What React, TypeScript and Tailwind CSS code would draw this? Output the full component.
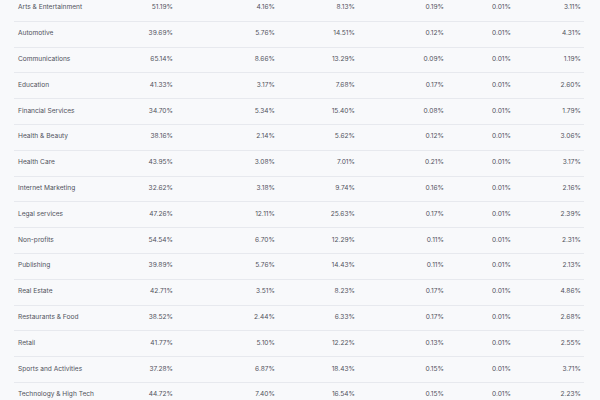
import React from "react";

const rows: [string, string, string, string, string, string, string][] = [
  ["Arts & Entertainment", "51.19%", "4.16%", "8.13%", "0.19%", "0.01%", "3.11%"],
  ["Automotive", "39.69%", "5.76%", "14.51%", "0.12%", "0.01%", "4.31%"],
  ["Communications", "65.14%", "8.66%", "13.29%", "0.09%", "0.01%", "1.19%"],
  ["Education", "41.33%", "3.17%", "7.68%", "0.17%", "0.01%", "2.60%"],
  ["Financial Services", "34.70%", "5.34%", "15.40%", "0.08%", "0.01%", "1.79%"],
  ["Health & Beauty", "38.16%", "2.14%", "5.62%", "0.12%", "0.01%", "3.06%"],
  ["Health Care", "43.95%", "3.08%", "7.01%", "0.21%", "0.01%", "3.17%"],
  ["Internet Marketing", "32.62%", "3.18%", "9.74%", "0.16%", "0.01%", "2.16%"],
  ["Legal services", "47.26%", "12.11%", "25.63%", "0.17%", "0.01%", "2.39%"],
  ["Non-profits", "54.54%", "6.70%", "12.29%", "0.11%", "0.01%", "2.31%"],
  ["Publishing", "39.89%", "5.76%", "14.43%", "0.11%", "0.01%", "2.13%"],
  ["Real Estate", "42.71%", "3.51%", "8.23%", "0.17%", "0.01%", "4.86%"],
  ["Restaurants & Food", "38.52%", "2.44%", "6.33%", "0.17%", "0.01%", "2.68%"],
  ["Retail", "41.77%", "5.10%", "12.22%", "0.13%", "0.01%", "2.55%"],
  ["Sports and Activities", "37.28%", "6.87%", "18.43%", "0.15%", "0.01%", "3.71%"],
  ["Technology & High Tech", "44.72%", "7.40%", "16.54%", "0.15%", "0.01%", "2.23%"],
];

export default function App() {
  return (
    <div className="w-[600px] h-[400px] overflow-hidden bg-[#f8f9fb]" style={{ fontFamily: "Inter, 'Noto Sans', sans-serif" }}>
      <div className="mt-[-4px] mx-[14px] w-[570px]">
        {rows.map((r, i) => (
          <div key={i} className="grid grid-cols-[100px_59px_102px_80px_89px_67px_70px] h-[25.8px] items-center border-b border-[#e7e9ee] text-[6.6px] text-[#50525c]">
            <div className="pl-[4px] whitespace-nowrap">{r[0]}</div>
            <div className="text-right">{r[1]}</div>
            <div className="text-right">{r[2]}</div>
            <div className="text-right">{r[3]}</div>
            <div className="text-right">{r[4]}</div>
            <div className="text-right">{r[5]}</div>
            <div className="text-right">{r[6]}</div>
          </div>
        ))}
      </div>
    </div>
  );
}
